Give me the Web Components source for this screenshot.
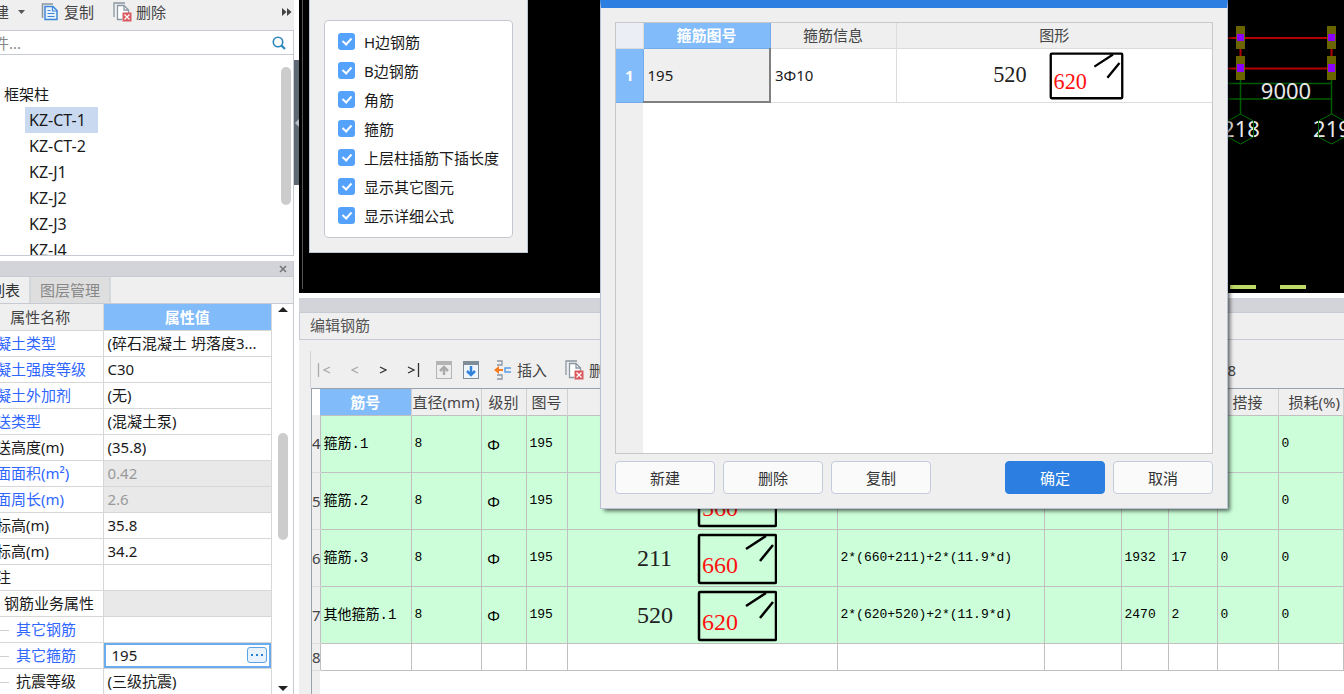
<!DOCTYPE html>
<html lang="zh-CN">
<head>
<meta charset="utf-8">
<title>钢筋编辑</title>
<style>
  html, body { height: 100%; }
  body {
    margin: 0; overflow: hidden; background: #fff; color: #1a1a1a;
    font: 15px/24px "Noto Sans", "Noto Sans CJK SC", sans-serif;
    --panel: #efefef; --bar: #d3d4d9; --line: #c6cbd1; --head: #81bbf9; --accent: #2c7fe0;
  }
</style>
</head>
<body>
<app-workspace>
  <component-tree slot="side"></component-tree>
  <property-panel slot="side"></property-panel>
  <cad-canvas slot="main"><display-options></display-options></cad-canvas>
  <rebar-editor slot="main"></rebar-editor>
  <stirrup-dialog slot="overlay"></stirrup-dialog>
</app-workspace>

<script>
const BASE = `
  *, *::before { box-sizing: border-box; }
  :host { box-sizing: border-box; }
  button { font: inherit; color: inherit; background: none; border: 0; padding: 0; margin: 0; display: flex; align-items: center; white-space: nowrap; }
  svg { display: block; flex: none; }
  table { border-collapse: collapse; table-layout: fixed; width: 100%; }
  th { font-weight: 400; }
  th, td { padding: 0; white-space: nowrap; }
`;
function define(name, css, html) {
  customElements.define(name, class extends HTMLElement {
    constructor() {
      super();
      const t = document.createElement('template');
      t.innerHTML = `<style>${BASE}${css}</style>` + (typeof html === 'function' ? html(this) : html);
      this.attachShadow({ mode: 'open' }).append(t.content.cloneNode(true));
    }
  });
}

const copyIcon = `<svg width="17" height="18" viewBox="0 0 17 18" fill="none"><path d="M1.500 15V1H12" stroke="#8a97a3" stroke-width="1.500"/><path d="M4 3.500h8l4 4V16.500H4z" fill="#e8f2fd" stroke="#3f86d8" stroke-width="1.500"/><path d="M11.500 3.500V8H16M6.500 7.500h3M6.500 10.500h7M6.500 13.500h7" stroke="#3f86d8" stroke-width="1.200"/></svg>`;
const deleteIcon = `<svg width="19" height="20" viewBox="0 0 19 20" fill="none"><path d="M1 15V1H12" stroke="#8a97a3" stroke-width="1.300"/><path d="M9 17.500H4.500V3.500H11l4.500 4.500v3" fill="#fff" stroke="#8a97a3" stroke-width="1.300"/><path d="M11 3.500V8h4.500" stroke="#8a97a3" stroke-width="1.300"/><rect x="9.500" y="10.500" width="9" height="9" fill="#d9595f"/><path d="M11.500 12.500l5 5m0-5l-5 5" stroke="#fff" stroke-width="1.200"/></svg>`;

define('app-workspace', `
  :host { display: flex; height: 100vh; position: relative; overflow: hidden; }
  .side { flex: 0 0 294px; display: flex; flex-direction: column; min-width: 0; }
  .grip { flex: 0 0 5px; padding-top: 60px; }
  .grip button { width: 5px; height: 125px; background: #5f6975; justify-content: flex-end; }
  .main { flex: 1; min-width: 0; display: flex; flex-direction: column; gap: 5px; }
`, `
  <div class="side"><slot name="side"></slot></div>
  <div class="grip"><button aria-label="收起"><svg width="4" height="8"><path d="M4 0L0 4l4 4z" fill="#b8bec5"/></svg></button></div>
  <div class="main"><slot name="main"></slot></div>
  <slot name="overlay"></slot>
`);

define('component-tree', `
  :host { display: flex; flex-direction: column; flex: 0 0 256px; min-height: 0; border-right: 1px solid var(--line); border-bottom: 1px solid var(--line); }
  .tools { display: flex; align-items: flex-start; flex: 0 0 30px; background: var(--panel); color: #444; margin-right: -1px; }
  .tools button { height: 24px; gap: 6px; }
  .new { width: 41px; margin-left: -6px; }
  .copy { margin-left: 6px; }
  .tools .del { margin-left: 19px; gap: 4px; }
  .tools .more { margin-left: auto; margin-right: 2px; }
  .new svg { margin-left: 3px; }
  form { display: flex; align-items: center; flex: 0 0 25px; border: solid var(--line); border-width: 1px 0; padding-right: 7px; margin: 0; }
  input { flex: 1; min-width: 0; border: 0; outline: 0; padding: 0; margin-left: -6px; font: inherit; height: 22px; background: none; }
  input::placeholder { color: #888; }
  .view { flex: 1; display: flex; overflow: hidden; min-height: 0; line-height: 26px; }
  ul { list-style: none; margin: 0; padding: 0; }
  .view > ul { flex: 1; padding: 26px 0 0 4px; }
  ul ul { padding-left: 21px; font-size: 16px; }
  ul ul span { display: inline-block; height: 26px; padding: 0 12px 0 4px; vertical-align: top; }
  .on { background: #c9d9f0; }
  .thumb { flex: 0 0 10px; height: 138px; margin: 12px 2px 0; border-radius: 5px; background: #ccc; }
`, `
  <div class="tools">
    <button class="new">建 <svg width="8" height="5"><path d="M0 0h7L3.500 4z" fill="#555"/></svg></button>
    <button class="copy">${copyIcon}复制</button>
    <button class="del">${deleteIcon}删除</button>
    <button class="more" aria-label="更多"><svg width="10" height="8"><path d="M0 0l4.500 4L0 8zM5 0l4.500 4L5 8z" fill="#444"/></svg></button>
  </div>
  <form><input type="text" aria-label="搜索构件" placeholder="件..."><button type="button" aria-label="搜索"><svg width="14" height="14" fill="none" stroke="#2a85bd"><circle cx="6" cy="6" r="4.700" stroke-width="1.600"/><path d="M9.500 9.500L13 13" stroke-width="2.200"/></svg></button></form>
  <div class="view">
    <ul><li>框架柱<ul>
      <li><span class="on">KZ-CT-1</span></li><li><span>KZ-CT-2</span></li><li><span>KZ-J1</span></li><li><span>KZ-J2</span></li><li><span>KZ-J3</span></li><li><span>KZ-J4</span></li>
    </ul></li></ul>
    <div class="thumb"></div>
  </div>
`);

const props = [
  ['凝土类型', '(碎石混凝土 坍落度3...', 'blue'], ['凝土强度等级', 'C30', 'blue'], ['凝土外加剂', '(无)', 'blue'],
  ['送类型', '(混凝土泵)', 'blue'], ['送高度(m)', '(35.8)', ''], ['面面积(m²)', '0.42', 'blue off'],
  ['面周长(m)', '2.6', 'blue off'], ['标高(m)', '35.8', ''], ['标高(m)', '34.2', ''], ['注', '', ''],
  ['钢筋业务属性', '', 'group off'], ['其它钢筋', '', 'blue child'], ['其它箍筋', null, 'blue child'], ['抗震等级', '(三级抗震)', 'child'],
];
define('property-panel', `
  :host { display: flex; flex-direction: column; flex: 1; min-height: 0; margin-top: 5px; border-right: 1px solid var(--line); background: var(--panel); }
  .bar { display: flex; justify-content: flex-end; flex: 0 0 15px; padding-right: 6px; background: var(--bar); }
  .tabs { display: flex; flex: 0 0 28px; border: solid var(--line); border-width: 1px 0; }
  .tabs button { padding: 0 9px; border-right: 2px solid #d4d7da; background: #dedede; color: #888; }
  .tabs .on { background: var(--panel); color: #333; margin-left: -19px; }
  .body { flex: 1; min-height: 0; display: flex; overflow: hidden; background: #fff; }
  .grid { flex: 1; min-width: 0; margin-left: -4px; }
  .name { width: 107px; }
  th, td { border: 1px solid #d7d7d7; border-left: 0; height: 26px; text-align: left; overflow: hidden; }
  thead th { text-align: center; background: var(--panel); border-top: 0; color: #444; }
  thead th:first-child { padding-right: 18px; }
  thead th.on { background: var(--head); color: #fff; font-weight: 700; }
  td { padding-left: 4px; }
  .blue th { color: #2f66ff; }
  .off td { background: #e9e9e9; color: #999; }
  .group th { padding-left: 8px; }
  .child th::before { content: ""; display: inline-block; width: 13px; height: 1px; margin-right: 7px; vertical-align: middle; background: #d0d0d0; }
  td.edit { padding: 0; }
  .field { display: flex; align-items: center; height: 25px; border: 2px solid #69abec; padding: 0 2px 0 6px; background: #fff; }
  .field input { flex: 1; min-width: 0; border: 0; outline: 0; padding: 0; font: inherit; color: inherit; height: 20px; }
  .field button { width: 20px; height: 16px; border: 1px solid #5ba2e6; border-radius: 3px; background: #e8f2fc; justify-content: center; }
  .scroll { flex: 0 0 21px; display: flex; flex-direction: column; align-items: center; padding: 3px 0; }
  .thumb { width: 10px; height: 107px; margin-top: 121px; border-radius: 5px; background: #ccc; }
  .down { margin-top: auto; }
`, `
  <div class="bar"><button aria-label="关闭"><svg width="8" height="8" stroke="#777" stroke-width="1.600"><path d="M1 1l6 6M7 1L1 7"/></svg></button></div>
  <div class="tabs"><button class="on">列表</button><button>图层管理</button></div>
  <div class="body">
    <div class="grid"><table>
      <colgroup><col class="name"><col></colgroup>
      <thead><tr><th scope="col">属性名称</th><th scope="col" class="on">属性值</th></tr></thead>
      <tbody>${props.map(([n, v, c]) => `<tr class="${c}"><th scope="row">${n}</th>${v === null
        ? '<td class="edit"><div class="field"><input type="text" aria-label="其它箍筋" value="195"><button aria-label="编辑"><svg width="12" height="2" fill="#2b7fd3"><path d="M0 0h2v2H0zM5 0h2v2H5zM10 0h2v2h-2z"/></svg></button></div></td>'
        : `<td>${v}</td>`}</tr>`).join('')}</tbody>
    </table></div>
    <div class="scroll"><svg width="10" height="5"><path d="M0 5L5 0l5 5z" fill="#222"/></svg><div class="thumb"></div><svg class="down" width="10" height="5"><path d="M0 0l5 5 5-5z" fill="#222"/></svg></div>
  </div>
`);

define('cad-canvas', `
  :host { display: flex; justify-content: space-between; align-items: flex-start; flex: 0 0 293px; background: #000; overflow: hidden; }
  .edge { width: 1px; height: 289px; margin: 0 6px 0 3px; background: #555; }
  .draw { margin-left: auto; font-family: "Noto Sans", sans-serif; }
`, `
  <div class="edge"></div><slot></slot>
  <svg class="draw" width="120" height="293" viewBox="1224 0 120 293">
    <g stroke="#b40000" stroke-width="2"><path d="M1224 38h107M1224 68.500h107M1240.500 49v8M1331.500 49v8"/></g>
    <g fill="#6a6400"><path d="M1236 26h9v23h-9zM1236 56h9v24h-9zM1327 26h9v23h-9zM1327 56h9v24h-9z"/></g>
    <g fill="#8b00ff"><path d="M1237 34h7v7h-7zM1237 64h7v8h-7zM1328 34h7v7h-7zM1328 64h7v8h-7z"/></g>
    <g stroke="#005c00" stroke-width="1.500" fill="none"><path d="M1224 83.500h107.500M1224 99h107.500M1240.500 80v34M1331.500 80v34"/></g>
    <g fill="#e8e8e8" font-size="22" text-anchor="middle"><text x="1286" y="99">9000</text><text x="1241" y="137">218</text><text x="1332" y="137">219</text></g>
    <g stroke="#007000" fill="none"><path d="M1240.500 114l13 7v16l-13 7-13-7v-16zM1331.500 114l13 7v16l-13 7-13-7v-16z"/></g>
    <path d="M1230 285h26v4h-26zM1280 285h26v4h-26z" fill="#bfd966"/>
  </svg>
`);

define('display-options', `
  :host { display: block; flex: 0 0 217px; background: var(--panel); border: 1px solid #bcc6d2; border-top: 0; padding: 20px 14px 14px; }
  fieldset { margin: 0; padding: 6px 13px 7px; border: 1px solid #c3c8cf; border-radius: 4px; background: #fff; }
  label { display: flex; align-items: center; gap: 9px; height: 29px; white-space: nowrap; }
  input { appearance: none; flex: none; width: 17px; height: 17px; margin: 0; border-radius: 3px; background: #55a2fc; display: grid; justify-content: center; padding-top: 3px; }
  input:checked::before { content: ""; width: 6px; height: 9px; border: solid #fff; border-width: 0 2px 2px 0; transform: rotate(42deg); }
`, `<fieldset aria-label="显示选项">${['H边钢筋', 'B边钢筋', '角筋', '箍筋', '上层柱插筋下插长度', '显示其它图元', '显示详细公式']
    .map(t => `<label><input type="checkbox" checked>${t}</label>`).join('')}</fieldset>`);

define('stirrup-shape', `
  :host { display: block; font-family: "Liberation Serif", serif; }
  svg { margin: 0 auto; }
`, el => {
  const small = el.hasAttribute('small');
  return `<svg width="${small ? 140 : 149}" height="${small ? 52 : 56}" viewBox="-9 0 149 56">
    <text x="0" y="36" font-size="24" fill="#222">${el.getAttribute('b') || ''}</text>
    <rect x="62" y="5" width="77" height="48" rx="1" fill="none" stroke="#000" stroke-width="2.500"/>
    <path d="M109 19l20-13M123 31l13-16" stroke="#000" stroke-width="2.500" fill="none"/>
    <text x="65" y="43" font-size="24" fill="#f11">${el.getAttribute('h')}</text></svg>`;
});

const shape = (b, h) => `<stirrup-shape b="${b}" h="${h}"></stirrup-shape>`;
const rows = [
  ['4', '箍筋.1', '8', 'Φ', '195', '', '', '', '', '', '', '0'],
  ['5', '箍筋.2', '8', 'Φ', '195', shape('', '560'), '', '', '', '', '', '0'],
  ['6', '箍筋.3', '8', 'Φ', '195', shape('211', '660'), '2*(660+211)+2*(11.9*d)', '', '1932', '17', '0', '0'],
  ['7', '其他箍筋.1', '8', 'Φ', '195', shape('520', '620'), '2*(620+520)+2*(11.9*d)', '', '2470', '2', '0', '0'],
  ['8', '', '', '', '', '', '', '', '', '', '', ''],
];
define('rebar-editor', `
  :host { display: flex; flex-direction: column; flex: 1; min-height: 0; background: var(--panel); }
  .bar { height: 14px; background: var(--bar); }
  h2 { margin: 0; height: 28px; padding-left: 10px; border: 1px solid var(--line); border-right: 0; font: inherit; color: #555; }
  .tools { display: flex; align-items: center; height: 37px; margin: 11px 0 0 11px; padding: 0 108px 0 6px; border-left: 1px solid #cfd3d7; color: #444; }
  .tools button { gap: 5px; }
  .nav, .move { display: flex; gap: 20px; }
  .move { gap: 11px; margin: 0 15px 0 16px; }
  .tools .del { margin-left: 18px; }
  .total { margin-left: auto; }
  .sheet { flex: 1; min-height: 0; overflow: hidden; margin-left: 12px; border: solid #9aa1a8; border-width: 1px 0 0 1px; background: linear-gradient(to right, #efefef 8px, #fff 8px); }
  thead th { height: 26px; background: var(--panel); color: #444; border-right: 1px solid #d0d0d0; }
  thead th.on { background: var(--head); color: #fff; font-weight: 700; }
  thead th:first-child { background: #fff; border: 0; }
  thead th.loss { text-align: left; padding-left: 10px; }
  tbody td { height: 57px; padding-left: 3px; background: #ccffd9; border: 1px solid #c0c0c0; font: 13px/20px "Liberation Mono", "Noto Sans CJK SC", monospace; color: #000; }
  tbody td:nth-child(2) { font-size: 14px; }
  tbody td.grade { padding: 0; text-align: center; font: 15px/20px "Noto Sans", sans-serif; padding-right: 20px; }
  tbody td.shape { padding: 0; line-height: 0; }
  tbody th { background: var(--panel); color: #444; border-bottom: 1px solid #ddd; }
  tbody tr:last-child td { height: 27px; background: #fff; }
`, `
  <div class="bar"></div>
  <h2>编辑钢筋</h2>
  <div class="tools">
    <div class="nav">
      <button aria-label="首条"><svg width="14" height="16" fill="none" stroke="#aaa" stroke-width="1.300"><path d="M1.500 1v14M13 5L7 8l6 3"/></svg></button>
      <button aria-label="上一条"><svg width="8" height="16" fill="none" stroke="#aaa" stroke-width="1.300"><path d="M7 5L1 8l6 3"/></svg></button>
      <button aria-label="下一条"><svg width="8" height="16" fill="none" stroke="#333" stroke-width="1.300"><path d="M1 5l6 3-6 3"/></svg></button>
      <button aria-label="末条"><svg width="13" height="16" fill="none" stroke="#333" stroke-width="1.300"><path d="M1 5l6 3-6 3M11.500 1v14"/></svg></button>
    </div>
    <div class="move">
      <button aria-label="上移"><svg width="16" height="18"><path d="M0 0h16v18H0z" fill="#b4b4b4"/><path d="M1 4h14v13H1z" fill="#eee"/><path d="M8 14V6M4 10l4-4 4 4" fill="none" stroke="#aaa" stroke-width="2.500"/></svg></button>
      <button aria-label="下移"><svg width="16" height="18"><path d="M0 0h16v18H0z" fill="#7f8d99"/><path d="M1 4h14v13H1z" fill="#eef5fc"/><path d="M8 5v9M4 10l4 4 4-4" fill="none" stroke="#3584dc" stroke-width="2.500"/></svg></button>
    </div>
    <button><svg width="18" height="20" fill="none"><path d="M3 1h5v4H3M3 15h5v4H3" stroke="#8a97a3" stroke-width="1.300"/><path d="M0 10l5-4v3h4v2H5v3z" fill="#f47b20"/><path d="M17 8h-6v4h6" stroke="#5a9fe4" stroke-width="1.500"/></svg>插入</button>
    <button class="del">${deleteIcon}删除</button>
    <span class="total">8</span>
  </div>
  <div class="sheet"><table>
    <colgroup>${[8, 91, 70, 45, 41, 270, 207, 77, 47, 49, 61].map(w => `<col style="width:${w}px">`).join('')}<col></colgroup>
    <thead><tr><th></th><th class="on">筋号</th><th>直径(mm)</th><th>级别</th><th>图号</th><th></th><th></th><th></th><th></th><th></th><th>搭接</th><th class="loss">损耗(%)</th></tr></thead>
    <tbody>${rows.map(r => '<tr>' + r.map((c, i) => i === 0 ? `<th scope="row">${c}</th>` : `<td class="${i === 3 ? 'grade' : i === 5 ? 'shape' : ''}">${c}</td>`).join('') + '</tr>').join('')}</tbody>
  </table></div>
`);

define('stirrup-dialog', `
  :host { position: absolute; left: 600px; top: 0; width: 628px; display: flex; flex-direction: column; background: var(--panel); border: 1px solid #b9c2d4; border-top: 8px solid var(--accent); box-shadow: 3px 3px 4px -1px rgba(0,0,0,.6); padding: 14px; gap: 7px; }
  .frame { height: 432px; border: 1px solid #c8c8c8; background: linear-gradient(to right, #efefef 27px, #fff 27px); }
  th, td { border: 1px solid #dcdcdc; border-left: 0; }
  tr > :last-child { border-right: 0; }
  thead th { height: 25px; background: var(--panel); color: #444; border-top: 0; }
  thead th:first-child { background: #ebeff5; }
  thead th.on, tbody th { background: var(--head); color: #fff; font-weight: 700; border-color: #72abe8; }
  td { height: 54px; padding-left: 4px; background: #fff; }
  td.on { background: #efefef; border-right: 2px solid #808080; border-bottom: 2px solid #808080; }
  td.shape { padding: 0; line-height: 0; }
  .actions { display: flex; gap: 8px; }
  .actions button { width: 100px; height: 33px; justify-content: center; border: 1px solid #c5cbdd; border-radius: 4px; background: #fafafa; color: #333; }
  .actions .ok { margin-left: auto; background: var(--accent); border-color: var(--accent); color: #fff; }
`, `
  <div class="frame"><table>
    <colgroup><col style="width:27px"><col style="width:127px"><col style="width:126px"><col></colgroup>
    <thead><tr><th></th><th class="on">箍筋图号</th><th>箍筋信息</th><th>图形</th></tr></thead>
    <tbody><tr><th scope="row">1</th><td class="on">195</td><td>3Φ10</td><td class="shape"><stirrup-shape small b="520" h="620"></stirrup-shape></td></tr></tbody>
  </table></div>
  <div class="actions"><button>新建</button><button>删除</button><button>复制</button><button class="ok">确定</button><button>取消</button></div>
`);
</script>
</body>
</html>
